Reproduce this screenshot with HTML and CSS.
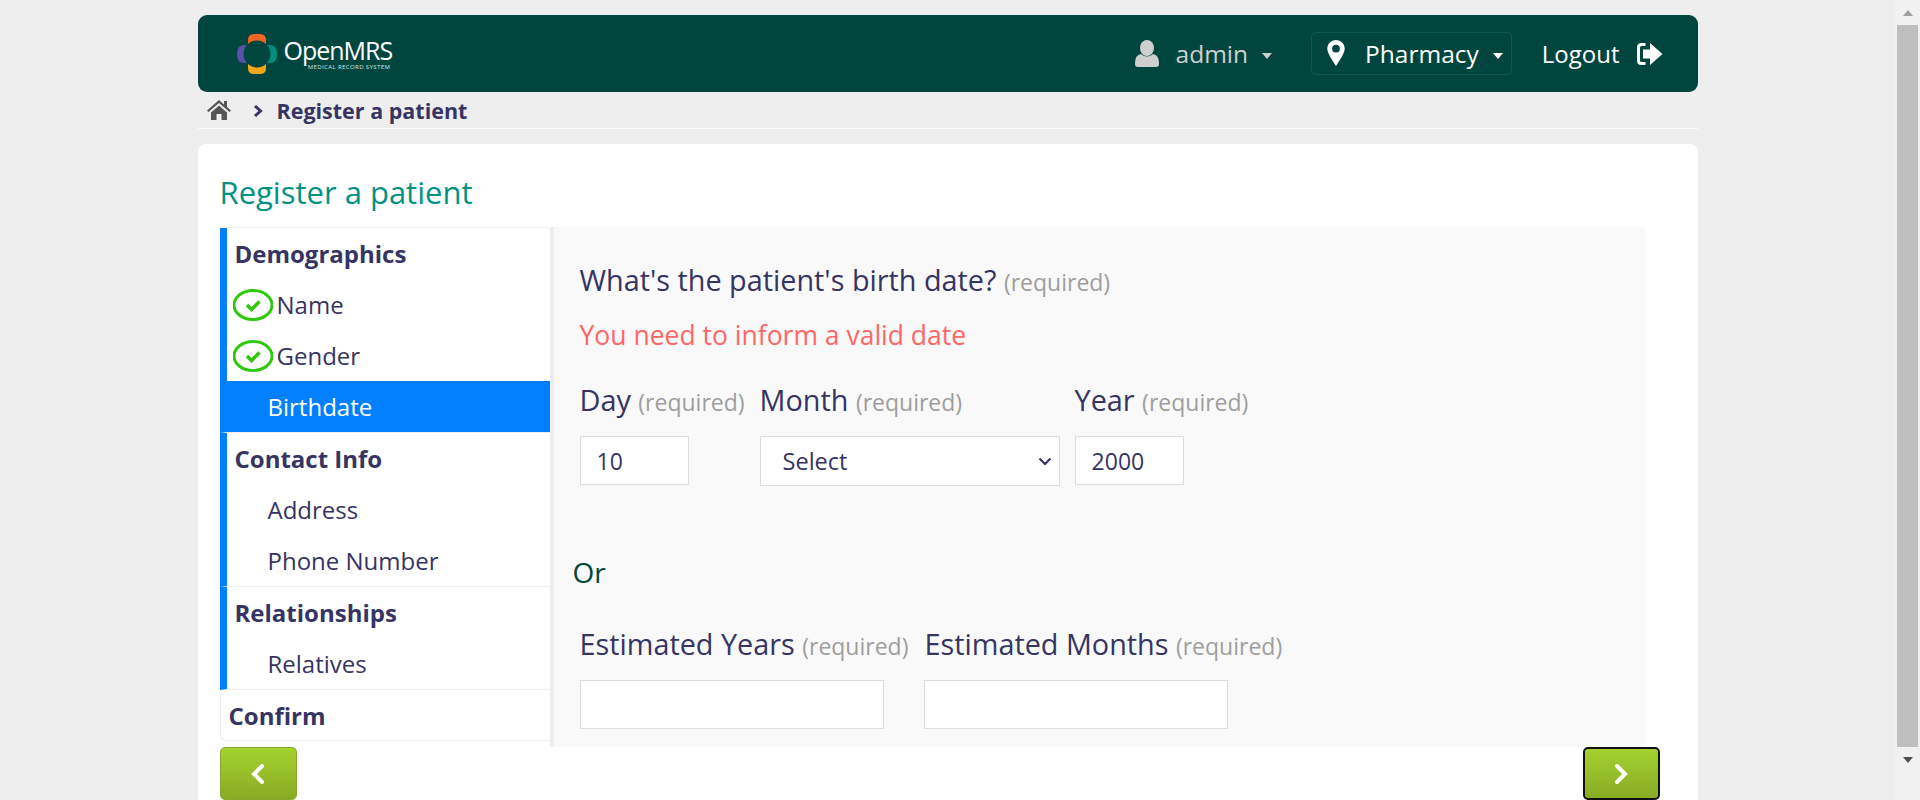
FILE: index.html
```html
<!DOCTYPE html>
<html lang="en">
<head>
    <meta charset="UTF-8">
    <title>OpenMRS - Register a patient</title>
    <link rel="stylesheet" href="styles.css">
</head>
<body>
    <div class="container">
        <header class="topbar">
            <a class="logo">
                <svg class="logo-mark" viewBox="0 0 40 40" width="40" height="40">
                    <path d="M11 6 Q11 0 17 0 H23 Q29 0 29 6 V10 H11 Z" fill="#f26522"/>
                    <path d="M11 34 Q11 40 17 40 H23 Q29 40 29 34 V30 H11 Z" fill="#f0a818"/>
                    <path d="M7 11 Q0 11 0 20 Q0 29 7 29 H12 V11 Z" fill="#5b4fa8"/>
                    <path d="M33 11 Q40 11 40 20 Q40 29 33 29 H28 V11 Z" fill="#008f7c"/>
                    <circle cx="20" cy="20" r="13.5" fill="#00463f"/>
                </svg>
                <span class="logo-text">
                    <span class="logo-name">OpenMRS</span>
                    <span class="logo-sub">MEDICAL RECORD SYSTEM</span>
                </span>
            </a>
            <nav class="topnav">
                <span class="nav-item nav-user">
                    <svg class="nav-icon" viewBox="0 0 24 28" width="24" height="28">
                        <ellipse cx="12" cy="8" rx="7" ry="8" fill="#cfcfcf"/>
                        <path d="M6 14 Q12 19 18 14 Q24 15 24 23 V24 Q24 27 21 27 H3 Q0 27 0 24 V23 Q0 15 6 14 Z" fill="#cfcfcf"/>
                    </svg>
                    <span class="nav-name">admin</span>
                    <span class="caret"></span>
                </span>
                <span class="nav-item nav-location">
                    <svg class="nav-icon" viewBox="0 0 18 28" width="18" height="27">
                        <path fill-rule="evenodd" d="M9 0 C14 0 18 4 18 9 C18 14 12 22 9 27 C6 22 0 14 0 9 C0 4 4 0 9 0 Z M9 5 A4 4 0 1 0 9 13 A4 4 0 1 0 9 5 Z" fill="#fff"/>
                    </svg>
                    <span class="nav-place">Pharmacy</span>
                    <span class="caret caret-white"></span>
                </span>
                <span class="nav-item nav-logout">
                    <span>Logout</span>
                    <svg class="nav-icon" viewBox="0 0 26 24" width="26" height="24">
                        <path d="M8.500 2.500 H4.500 Q1.500 2.500 1.500 5.500 V18.500 Q1.500 21.500 4.500 21.500 H8.500" fill="none" stroke="#fff" stroke-width="3"/>
                        <path d="M6 7.500 H13 V1 L25.500 12 L13 23 V16.500 H6 Z" fill="#fff"/>
                    </svg>
                </span>
            </nav>
        </header>

        <div class="breadcrumb">
            <svg class="home" viewBox="0 0 24 20" width="24" height="20">
                <path d="M12 0 L0 10.5 L1.5 12 L12 3 L22.500 12 L24 10.5 L20 7 V1 H17 V4.400 Z" fill="#555"/>
                <path d="M4 12.500 L12 5.500 L20 12.500 V20 H14.500 V14 H9.500 V20 H4 Z" fill="#555"/>
            </svg>
            <svg class="crumb-sep" viewBox="0 0 10 14" width="10" height="14">
                <path d="M2 2 L7.500 7 L2 12" fill="none" stroke="#363463" stroke-width="3"/>
            </svg>
            <span class="crumb-text">Register a patient</span>
        </div>

        <main class="card">
            <h1 class="page-title">Register a patient</h1>
            <div class="wizard">
                <ul class="steps">
                    <li class="section">
                        <div class="section-title">Demographics</div>
                        <div class="step">
                            <svg class="done" viewBox="0 0 40 32" width="40" height="32">
                                <ellipse cx="20" cy="16" rx="19" ry="14.500" fill="none" stroke="#2ec90a" stroke-width="3"/>
                                <path d="M14 16 L18.500 20.500 L26.500 12.500" fill="none" stroke="#2ec90a" stroke-width="3.500"/>
                            </svg>
                            <span>Name</span>
                        </div>
                        <div class="step">
                            <svg class="done" viewBox="0 0 40 32" width="40" height="32">
                                <ellipse cx="20" cy="16" rx="19" ry="14.500" fill="none" stroke="#2ec90a" stroke-width="3"/>
                                <path d="M14 16 L18.500 20.500 L26.500 12.500" fill="none" stroke="#2ec90a" stroke-width="3.500"/>
                            </svg>
                            <span>Gender</span>
                        </div>
                        <div class="step step-current">Birthdate</div>
                    </li>
                    <li class="section">
                        <div class="section-title">Contact Info</div>
                        <div class="step">Address</div>
                        <div class="step">Phone Number</div>
                    </li>
                    <li class="section">
                        <div class="section-title">Relationships</div>
                        <div class="step">Relatives</div>
                    </li>
                    <li class="section section-confirm">
                        <div class="section-title">Confirm</div>
                    </li>
                </ul>
                <section class="panel">
                    <h2 class="question">What's the patient's birth date? <small>(required)</small></h2>
                    <p class="error">You need to inform a valid date</p>
                    <div class="fields">
                        <div class="field">
                            <label for="day">Day <small>(required)</small></label>
                            <input id="day" class="input-short" type="text" value="10">
                        </div>
                        <div class="field">
                            <label for="month">Month <small>(required)</small></label>
                            <select id="month" class="input-month">
                                <option>Select</option>
                            </select>
                        </div>
                        <div class="field">
                            <label for="year">Year <small>(required)</small></label>
                            <input id="year" class="input-short" type="text" value="2000">
                        </div>
                    </div>
                    <p class="or">Or</p>
                    <div class="fields fields-estimate">
                        <div class="field">
                            <label for="years">Estimated Years <small>(required)</small></label>
                            <input id="years" class="input-long" type="text">
                        </div>
                        <div class="field">
                            <label for="months">Estimated Months <small>(required)</small></label>
                            <input id="months" class="input-long" type="text">
                        </div>
                    </div>
                </section>
            </div>
            <div class="wizard-nav">
                <button type="button" class="nav-btn">
                    <svg viewBox="0 0 16 22" width="16" height="22"><path d="M12 3 L4 11 L12 19" fill="none" stroke="#fff" stroke-width="4" stroke-linecap="round"/></svg>
                </button>
                <button type="button" class="nav-btn nav-btn-focus">
                    <svg viewBox="0 0 16 22" width="16" height="22"><path d="M4 3 L12 11 L4 19" fill="none" stroke="#fff" stroke-width="4" stroke-linecap="round"/></svg>
                </button>
            </div>
        </main>
    </div>

    <div class="scrollbar">
        <div class="scroll-btn"><span class="arrow-up"></span></div>
        <div class="scroll-thumb"></div>
        <div class="scroll-btn"><span class="arrow-down"></span></div>
    </div>
</body>
</html>
```

FILE: styles.css
```css
html {
    height: 100%;
    overflow: hidden;
}
body {
    margin: 0;
    padding-right: 25px;
    background-color: #eeeeee;
    font-family: "Open Sans", sans-serif;
    color: #363463;
}
.container {
    width: 1500px;
    margin: 0 auto;
    padding-top: 15px;
    padding-bottom: 16px;
}

/* window scrollbar, the page is a bit taller than the window */
.scrollbar {
    position: fixed;
    top: 0;
    right: 0;
    bottom: 0;
    display: flex;
    flex-direction: column;
    width: 25px;
    background-color: #f1f1f1;
}
.scroll-btn {
    display: flex;
    align-items: center;
    justify-content: center;
    height: 25px;
}
.scroll-thumb {
    height: 722px;
    margin: 0 2px;
    background-color: #bfbfbf;
}
.arrow-up,
.arrow-down {
    width: 0;
    height: 0;
    border-left: 5.500px solid transparent;
    border-right: 5.500px solid transparent;
}
.arrow-up {
    border-bottom: 6px solid #a0a0a0;
}
.arrow-down {
    border-top: 6px solid #505050;
}

/* top bar */
.topbar {
    display: flex;
    align-items: center;
    justify-content: space-between;
    height: 77px;
    padding: 0 35px 0 39px;
    background-color: #00463f;
    border-radius: 9px;
}
.logo {
    display: flex;
    align-items: center;
    gap: 7px;
}
.logo-text {
    display: flex;
    flex-direction: column;
    align-items: flex-end;
    color: #fff;
}
.logo-name {
    font-size: 25px;
    font-weight: 400;
    line-height: 28px;
    letter-spacing: -1px;
}
.logo-sub {
    font-size: 6px;
    line-height: 7px;
    letter-spacing: 0.4px;
    color: #d8e4e2;
    margin-right: 2px;
}
.topnav {
    display: flex;
    align-items: center;
    font-size: 24.500px;
}
.nav-item {
    display: flex;
    align-items: center;
}
.nav-user {
    color: #cfcfcf;
    margin-right: 39px;
}
.nav-name {
    margin-left: 17px;
}
.caret {
    display: inline-block;
    width: 0;
    height: 0;
    margin-left: 14px;
    margin-top: 4px;
    border-top: 6px solid #cfcfcf;
    border-left: 5.500px solid transparent;
    border-right: 5.500px solid transparent;
}
.caret-white {
    border-top-color: #fff;
}
.nav-location {
    height: 41px;
    padding: 0 8px 0 15px;
    color: #fff;
    border: 1px solid #0a5c53;
    border-radius: 4px;
    margin-right: 30px;
}
.nav-place {
    margin-left: 20px;
}
.nav-logout {
    color: #fff;
    font-size: 24px;
    gap: 17px;
}

/* breadcrumb */
.breadcrumb {
    display: flex;
    align-items: center;
    height: 36px;
    padding-left: 9px;
    border-bottom: 1px solid #fbfbfb;
}
.crumb-sep {
    margin-left: 22px;
    margin-top: 2px;
}
.crumb-text {
    margin-left: 14px;
    font-size: 21.500px;
    font-weight: 700;
}

/* card */
.card {
    margin-top: 15px;
    padding: 28px 38px 12px 22px;
    background-color: #fff;
    border-radius: 8px;
}
.page-title {
    margin: 0 0 15px 0;
    font-size: 31px;
    font-weight: 400;
    line-height: 40px;
    color: #009384;
}
.wizard {
    display: flex;
    width: 1425px;
    height: 520px;
}
.steps {
    flex: none;
    width: 330px;
    margin: 0;
    padding: 0;
    list-style: none;
    border-top: 1px solid #eee;
    border-radius: 4px;
    font-size: 24px;
}
.section {
    border-left: 7px solid #007fff;
    border-bottom: 1px solid #eee;
}
.section-title {
    height: 51px;
    line-height: 51px;
    padding-left: 8px;
    font-weight: 700;
}
.step {
    display: flex;
    align-items: center;
    height: 51px;
    padding-left: 41px;
    font-weight: 400;
}
.done {
    flex: none;
    margin-left: -35px;
    margin-right: 4px;
}
.step-current {
    margin-left: -7px;
    padding-left: 48px;
    color: #fff;
    background-color: #007fff;
}
.section-confirm {
    border-left: 1px solid #eee;
    border-bottom-left-radius: 6px;
}
.section-confirm .section-title {
    height: 50px;
}
.panel {
    flex: 1;
    padding-left: 26px;
    background-color: #f9f9f9;
    border-left: 4px solid #eee;
    overflow: hidden;
}
small {
    font-size: 23px;
    font-weight: 400;
    color: #9e9e9e;
}
.question {
    margin: 31px 0 0 0;
    font-size: 28.800px;
    font-weight: 400;
    line-height: 44px;
}
.error {
    margin: 9px 0 0 0;
    font-size: 26.500px;
    line-height: 44px;
    color: #ff6666;
}
.fields {
    display: flex;
    gap: 15px;
    margin-top: 21px;
}
.fields-estimate {
    gap: 16px;
    margin-top: 28px;
}
.field label {
    display: block;
    font-size: 28.800px;
    line-height: 44px;
    margin-bottom: 12px;
}
input,
select {
    box-sizing: border-box;
    display: block;
    font-family: "Open Sans", sans-serif;
    color: #363463;
    background-color: #fff;
    border: 1px solid #ddd;
    border-radius: 0;
}
input {
    height: 49px;
    padding: 0 16px;
    font-size: 23px;
}
.input-short {
    width: 109px;
}
.input-month {
    width: 300px;
    height: 50px;
    padding: 0 22px;
    font-size: 23.500px;
    appearance: none;
    background-image: url("data:image/svg+xml,%3Csvg xmlns='http://www.w3.org/2000/svg' width='14' height='9'%3E%3Cpath d='M1.500 1.500 L7 7 L12.500 1.500' fill='none' stroke='%23363463' stroke-width='2.200'/%3E%3C/svg%3E");
    background-repeat: no-repeat;
    background-position: right 7px center;
}
.input-long {
    width: 304px;
}
.or {
    margin: 64px 0 0 -7px;
    font-size: 28px;
    line-height: 44px;
    color: #00463f;
}

/* back / next */
.wizard-nav {
    display: flex;
    justify-content: space-between;
    width: 1440px;
}
.nav-btn {
    display: flex;
    align-items: center;
    justify-content: center;
    box-sizing: border-box;
    width: 77px;
    height: 53px;
    padding: 0;
    border: 1px solid #8aa82a;
    border-radius: 5px;
    background: linear-gradient(#a4d22f, #88ab25);
    cursor: pointer;
}
.nav-btn-focus {
    border: 2px solid #111;
}
```
